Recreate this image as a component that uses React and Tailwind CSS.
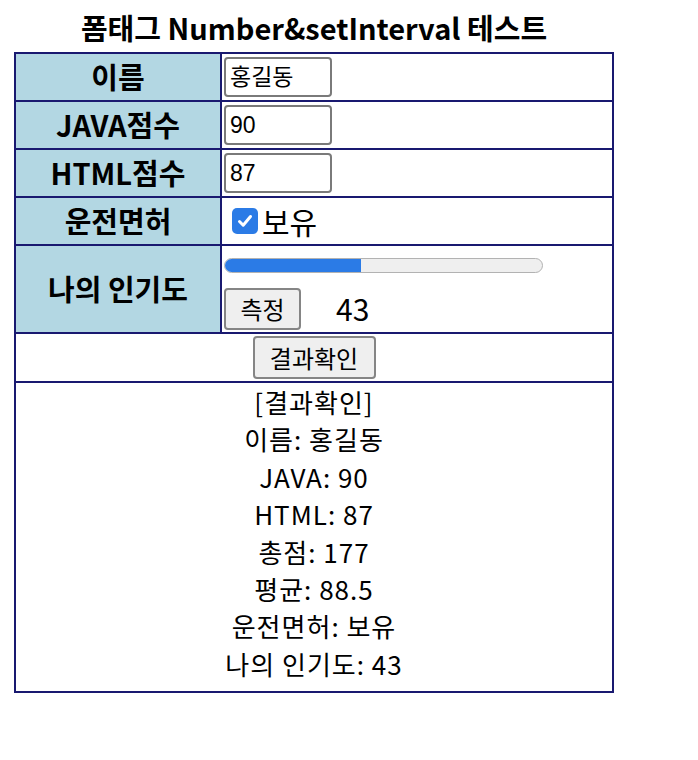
import React from "react";

const F = { fontFamily: '"Noto Sans CJK KR", "Noto Sans", sans-serif' };

function Label({ children }) {
  return (
    <div className="w-[206px] shrink-0 border-r-2 border-[#191970] bg-[#b3d7e3] flex items-center justify-center text-[29px] font-bold text-black">
      {children}
    </div>
  );
}

function TextBox({ value }) {
  return (
    <div
      className="w-[108px] h-[40px] border-2 border-[#7a7a7a] rounded-[4px] bg-white flex items-center pl-[4px] text-[23px] text-black"
      style={{ fontFamily: '"Liberation Sans", "Noto Sans CJK KR", sans-serif' }}
    >
      {value}
    </div>
  );
}

export default function App() {
  const results = [
    "[결과확인]",
    "이름: 홍길동",
    "JAVA: 90",
    "HTML: 87",
    "총점: 177",
    "평균: 88.5",
    "운전면허: 보유",
    "나의 인기도: 43",
  ];
  return (
    <div className="bg-white min-h-[760px] pl-[14px]" style={F}>
      <div className="w-[600px]">
        <div className="h-[52px] flex items-center justify-center pt-[4px] text-[29px] font-bold text-black">
          폼태그 Number&amp;setInterval 테스트
        </div>
        <div className="border-2 border-[#191970] flex flex-col">
          <div className="flex h-[48px] border-b-2 border-[#191970]">
            <Label>이름</Label>
            <div className="flex items-center pl-[2px]">
              <TextBox value="홍길동" />
            </div>
          </div>
          <div className="flex h-[48px] border-b-2 border-[#191970]">
            <Label>JAVA점수</Label>
            <div className="flex items-center pl-[2px]">
              <TextBox value="90" />
            </div>
          </div>
          <div className="flex h-[48px] border-b-2 border-[#191970]">
            <Label>HTML점수</Label>
            <div className="flex items-center pl-[2px]">
              <TextBox value="87" />
            </div>
          </div>
          <div className="flex h-[48px] border-b-2 border-[#191970]">
            <Label>운전면허</Label>
            <div className="flex items-center pl-[10px] gap-[4px]">
              <span className="w-[26px] h-[26px] rounded-[5px] bg-[#2b7be6] flex items-center justify-center">
                <svg width="18" height="18" viewBox="0 0 18 18" fill="none">
                  <path d="M3.5 9.5 L7.2 13.2 L14.5 4.5" stroke="white" strokeWidth="3" strokeLinecap="round" strokeLinejoin="round" />
                </svg>
              </span>
              <span className="text-[30px] text-black">보유</span>
            </div>
          </div>
          <div className="flex h-[88px] border-b-2 border-[#191970]">
            <Label>나의 인기도</Label>
            <div className="flex flex-col pl-[2px] pt-[12px]">
              <div className="w-[319px] h-[15px] rounded-full border border-[#b2b2b2] bg-[#efefef] overflow-hidden">
                <div className="h-full bg-[#2b7be6]" style={{ width: "43%" }} />
              </div>
              <div className="flex items-center mt-[13px]">
                <button className="w-[77px] h-[42px] border-2 border-[#858585] rounded-[4px] bg-[#efefef] text-[24px] text-black flex items-center justify-center">
                  측정
                </button>
                <span className="ml-[35px] text-[30px] text-black">43</span>
              </div>
            </div>
          </div>
          <div className="flex h-[49px] border-b-2 border-[#191970] items-center justify-center">
            <button className="w-[123px] h-[43px] border-2 border-[#858585] rounded-[4px] bg-[#efefef] text-[24px] text-black flex items-center justify-center">
              결과확인
            </button>
          </div>
          <div className="h-[308px] flex flex-col items-center text-[26px] tracking-[1px] leading-[37.4px] text-black">
            {results.map((r) => (
              <div key={r}>{r}</div>
            ))}
          </div>
        </div>
      </div>
    </div>
  );
}
